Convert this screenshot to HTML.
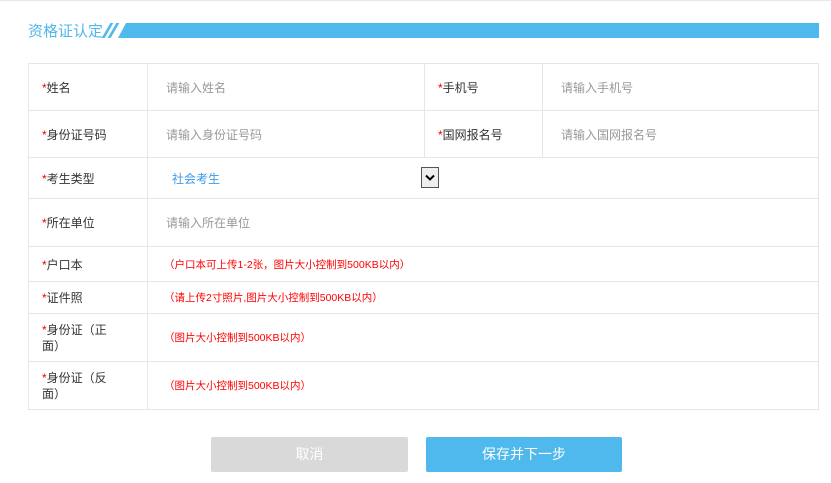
<!DOCTYPE html>
<html><head><meta charset="utf-8"><style>
body{margin:0;width:831px;height:483px;background:#fff;font-family:"Liberation Sans","Noto Sans CJK SC",sans-serif;position:relative;overflow:hidden;border-top:1px solid #e8e8e8;box-sizing:border-box}
.t{position:absolute;left:28px;top:19px;font-size:15px;color:#4fb8ec}
.bar{position:absolute;left:118px;top:22px;width:701px;height:15px;background:#4fb8ec;clip-path:polygon(8px 0,100% 0,100% 100%,0 100%)}
.sl{position:absolute;top:22px;width:3px;height:15px;background:#4fb8ec;transform:skewX(-30deg)}
table{position:absolute;left:28px;top:62px;width:791px;border-collapse:collapse;font-size:12px}
td{border:1px solid #e6e6e6;padding:0;color:#333}
td.l{padding-left:13px}
td.i{padding-left:18px;color:#999}
.s{color:#e00}
.r{color:#f00;font-size:10.5px}
.btn{position:absolute;top:436px;height:35px;line-height:35px;text-align:center;font-size:14px;color:#fff;border-radius:2px}
</style></head><body>
<div class="t">资格证认定</div>
<div class="sl" style="left:106px"></div><div class="sl" style="left:112px"></div>
<div class="bar"></div>
<table>
<tr style="height:47px"><td class="l" style="width:105px"><span class="s">*</span>姓名</td><td class="i" style="width:258px">请输入姓名</td><td class="l" style="width:104px"><span class="s">*</span>手机号</td><td class="i">请输入手机号</td></tr>
<tr style="height:47px"><td class="l"><span class="s">*</span>身份证号码</td><td class="i">请输入身份证号码</td><td class="l"><span class="s">*</span>国网报名号</td><td class="i">请输入国网报名号</td></tr>
<tr style="height:41px"><td class="l"><span class="s">*</span>考生类型</td><td colspan="3" style="padding-left:24px;color:#3a9be8;position:relative">社会考生<svg style="position:absolute;left:273px;top:9px" width="18" height="21" viewBox="0 0 18 21"><rect x="0.5" y="0.5" width="17" height="20" fill="#eee" stroke="#555"/><path d="M5 8.5 L9 12.5 L13 8.5" fill="none" stroke="#000" stroke-width="2"/></svg></td></tr>
<tr style="height:48px"><td class="l"><span class="s">*</span>所在单位</td><td colspan="3" class="i">请输入所在单位</td></tr>
<tr style="height:35px"><td class="l"><span class="s">*</span>户口本</td><td colspan="3" class="r" style="padding-left:16px">（户口本可上传1-2张，图片大小控制到500KB以内）</td></tr>
<tr style="height:32px"><td class="l"><span class="s">*</span>证件照</td><td colspan="3" class="r" style="padding-left:16px">（请上传2寸照片,图片大小控制到500KB以内）</td></tr>
<tr style="height:48px"><td class="l" style="line-height:16px"><span class="s">*</span>身份证（正<br>面）</td><td colspan="3" class="r" style="padding-left:16px">（图片大小控制到500KB以内）</td></tr>
<tr style="height:48px"><td class="l" style="line-height:16px"><span class="s">*</span>身份证（反<br>面）</td><td colspan="3" class="r" style="padding-left:16px">（图片大小控制到500KB以内）</td></tr>
</table>
<div class="btn" style="left:211px;width:197px;background:#d9d9d9">取消</div>
<div class="btn" style="left:426px;width:196px;background:#4fb8ec">保存并下一步</div>
</body></html>
